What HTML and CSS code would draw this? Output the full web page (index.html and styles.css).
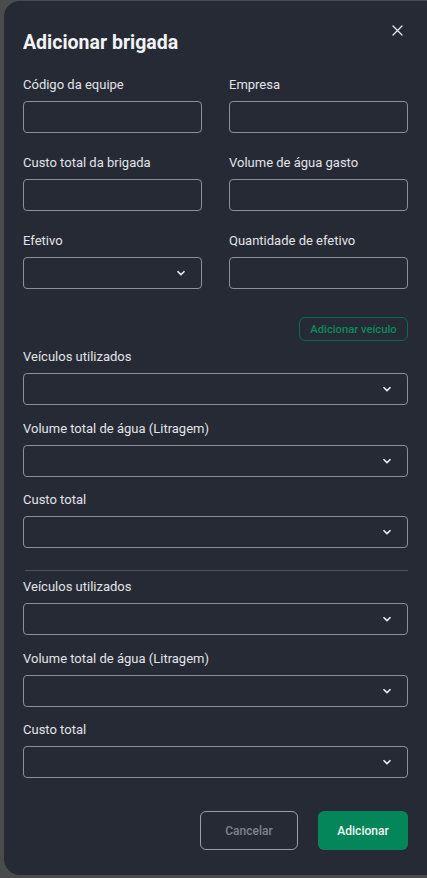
FILE: index.html
```html
<!DOCTYPE html>
<html lang="pt-BR">
<head>
<meta charset="utf-8">
<title>Adicionar brigada</title>
<link rel="stylesheet" href="styles.css">
</head>
<body>
<div class="modal">
  <button class="close" aria-label="Fechar">
    <svg width="11" height="11" viewBox="0 0 11 11"><path d="M1 1L10 10M10 1L1 10" stroke="#e6e7ea" stroke-width="1.3" stroke-linecap="round"/></svg>
  </button>
  <h1 class="title">Adicionar brigada</h1>

  <div class="grid">
    <div class="field"><label class="label">Código da equipe</label><div class="input"></div></div>
    <div class="field"><label class="label">Empresa</label><div class="input"></div></div>
    <div class="field"><label class="label">Custo total da brigada</label><div class="input"></div></div>
    <div class="field"><label class="label">Volume de água gasto</label><div class="input"></div></div>
    <div class="field"><label class="label">Efetivo</label><div class="input select"><svg class="chev" width="10" height="6" viewBox="0 0 10 6"><path d="M1.5 1.2L5 4.6L8.5 1.2" fill="none" stroke="#eceef1" stroke-width="1.6"/></svg></div></div>
    <div class="field"><label class="label">Quantidade de efetivo</label><div class="input"></div></div>
  </div>

  <div class="addrow"><button class="btn-outline-green">Adicionar veículo</button></div>

  <div class="stack">
    <div class="field"><label class="label">Veículos utilizados</label><div class="input select"><svg class="chev" width="10" height="6" viewBox="0 0 10 6"><path d="M1.5 1.2L5 4.6L8.5 1.2" fill="none" stroke="#eceef1" stroke-width="1.6"/></svg></div></div>
    <div class="field"><label class="label">Volume total de água (Litragem)</label><div class="input select"><svg class="chev" width="10" height="6" viewBox="0 0 10 6"><path d="M1.5 1.2L5 4.6L8.5 1.2" fill="none" stroke="#eceef1" stroke-width="1.6"/></svg></div></div>
    <div class="field"><label class="label">Custo total</label><div class="input select"><svg class="chev" width="10" height="6" viewBox="0 0 10 6"><path d="M1.5 1.2L5 4.6L8.5 1.2" fill="none" stroke="#eceef1" stroke-width="1.6"/></svg></div></div>
  </div>

  <hr class="divider">

  <div class="stack">
    <div class="field"><label class="label">Veículos utilizados</label><div class="input select"><svg class="chev" width="10" height="6" viewBox="0 0 10 6"><path d="M1.5 1.2L5 4.6L8.5 1.2" fill="none" stroke="#eceef1" stroke-width="1.6"/></svg></div></div>
    <div class="field"><label class="label">Volume total de água (Litragem)</label><div class="input select"><svg class="chev" width="10" height="6" viewBox="0 0 10 6"><path d="M1.5 1.2L5 4.6L8.5 1.2" fill="none" stroke="#eceef1" stroke-width="1.6"/></svg></div></div>
    <div class="field"><label class="label">Custo total</label><div class="input select"><svg class="chev" width="10" height="6" viewBox="0 0 10 6"><path d="M1.5 1.2L5 4.6L8.5 1.2" fill="none" stroke="#eceef1" stroke-width="1.6"/></svg></div></div>
  </div>

  <div class="actions">
    <button class="btn-cancel">Cancelar</button>
    <button class="btn-primary">Adicionar</button>
  </div>
</div>
</body>
</html>
```

FILE: styles.css
```css
* { box-sizing: border-box; }
html, body { margin: 0; padding: 0; }
body {
  background: #4a4b4d;
  font-family: Roboto, "Liberation Sans", sans-serif;
  overflow: hidden;
  height: 878px;
}
.modal {
  position: relative;
  margin: 1px 0 0 4px;
  width: 440px;
  height: 874px;
  background: #262a35;
  border-radius: 16px;
  padding: 30px 0 0 19px;
}
.close {
  position: absolute;
  top: 24px;
  left: 388px;
  width: 11px;
  height: 11px;
  padding: 0;
  border: 0;
  background: none;
  display: flex;
}
.title {
  margin: 0;
  font-size: 19.5px;
  line-height: 24px;
  font-weight: 700;
  color: #f2f3f5;
}
.grid {
  width: 385px;
  margin-top: 21px;
  display: grid;
  grid-template-columns: 179px 179px;
  column-gap: 27px;
  row-gap: 21px;
}
.field { display: flex; flex-direction: column; }
.label {
  font-size: 13px;
  line-height: 17px;
  color: #e2e4e8;
  margin-bottom: 8px;
}
.input {
  height: 32px;
  border: 1px solid #8c909a;
  border-radius: 4px;
  display: flex;
  align-items: center;
  justify-content: flex-end;
  padding-right: 15px;
}
.addrow {
  width: 385px;
  margin-top: 28px;
  display: flex;
  justify-content: flex-end;
}
.btn-outline-green {
  height: 24px;
  width: 109px;
  padding: 0;
  border: 1px solid #0b6a4b;
  border-radius: 6px;
  background: transparent;
  color: #0b8a5d;
  font-family: Roboto, "Liberation Sans", sans-serif;
  font-size: 11.2px;
  font-weight: 500;
}
.stack {
  width: 385px;
  display: flex;
  flex-direction: column;
  gap: 14.5px;
  margin-top: 7px;
}
.divider {
  width: 383px;
  margin: 22px 0 0 2px;
  border: 0;
  height: 1px;
  background: #4c5160;
}
.divider + .stack { margin-top: 7px; }
.actions {
  width: 385px;
  margin-top: 33px;
  display: flex;
  justify-content: flex-end;
  gap: 20px;
}
.btn-cancel {
  width: 98px;
  height: 39px;
  border: 1px solid #9a9ea7;
  border-radius: 6px;
  background: transparent;
  color: #7e838e;
  font-family: Roboto, "Liberation Sans", sans-serif;
  font-size: 12px;
  font-weight: 500;
}
.btn-primary {
  width: 90px;
  height: 39px;
  border: 0;
  border-radius: 6px;
  background: #05855a;
  color: #f4f6f5;
  font-family: Roboto, "Liberation Sans", sans-serif;
  font-size: 12px;
  font-weight: 500;
}
```
